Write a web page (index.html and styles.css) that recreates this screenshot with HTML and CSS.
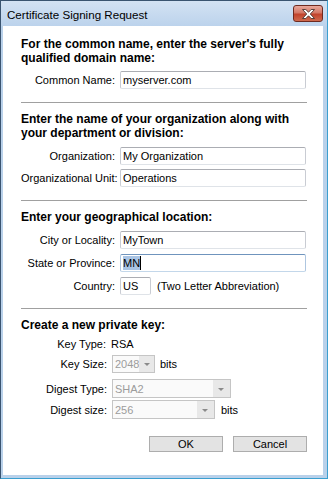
FILE: index.html
```html
<!doctype html>
<html>
<head>
<meta charset="utf-8">
<title>Certificate Signing Request</title>
<link rel="stylesheet" href="styles.css">
</head>
<body>
<div class="window">
	<div class="titlebar">
		<span class="title">Certificate Signing Request</span>
		<div class="close">
			<svg width="13" height="10" viewBox="0 0 13 10"><polygon points="0.5,0.5 3.8,0.5 6.5,3.2 9.2,0.5 12.5,0.5 8.3,5 12.5,9.5 9.2,9.5 6.5,6.8 3.8,9.5 0.5,9.5 4.7,5" fill="#fff" stroke="#4a3430" stroke-width="0.9" stroke-linejoin="round"/></svg>
		</div>
	</div>
	<div class="client">
		<div class="group first">
			<h2>For the common name, enter the server's fully qualified domain name:</h2>
			<div class="row r1"><label>Common Name:</label><div class="edit">myserver.com</div></div>
		</div>
		<hr>
		<div class="group">
			<h2>Enter the name of your organization along with your department or division:</h2>
			<div class="row r1"><label>Organization:</label><div class="edit">My Organization</div></div>
			<div class="row r2"><label>Organizational Unit:</label><div class="edit">Operations</div></div>
		</div>
		<hr>
		<div class="group">
			<h2>Enter your geographical location:</h2>
			<div class="row r1"><label>City or Locality:</label><div class="edit">MyTown</div></div>
			<div class="row"><label>State or Province:</label><div class="edit focus"><span class="sel">MN</span><i class="caret"></i></div></div>
			<div class="row"><label>Country:</label><div class="edit short">US</div><span class="note">(Two Letter Abbreviation)</span></div>
		</div>
		<hr>
		<div class="group">
			<h2>Create a new private key:</h2>
			<div class="krow ktype"><label>Key Type:</label><span>RSA</span></div>
			<div class="krow ksize"><label>Key Size:</label><div class="combo c-size"><span>2048</span><b></b></div><span class="unit">bits</span></div>
			<div class="krow dtype"><label>Digest Type:</label><div class="combo c-type"><span>SHA2</span><b></b></div></div>
			<div class="krow dsize"><label>Digest size:</label><div class="combo c-dsize"><span>256</span><b></b></div><span class="unit">bits</span></div>
		</div>
		<div class="buttons">
			<button class="btn">OK</button>
			<button class="btn">Cancel</button>
		</div>
	</div>
</div>
</body>
</html>
```
FILE: styles.css
```css
*{ margin:0; padding:0; box-sizing:border-box}
body{ width:328px; height:479px; overflow:hidden; font-family:"Liberation Sans", Arial, sans-serif; font-size:11px; color:#000; background:#fff}

.window{ width:328px; height:479px; display:flex; flex-direction:column; padding:0 4px 3px 2px; border:1px solid #3a5470; border-right-color:#3b9fd0; border-bottom-color:#3b9fd0; background:linear-gradient(#d3e2f3 0, #bcd3ec 25px, #b9d1ea 26px)}

.titlebar{ height:25px; display:flex; justify-content:space-between; align-items:flex-start}
.titlebar .title{ font-size:11.6px; line-height:14px; padding:7px 0 0 4px; color:#000}
.close{ width:30px; height:17px; margin-top:4px; display:flex; align-items:center; justify-content:center; border:1px solid #6e2a20; border-radius:3px; background:linear-gradient(#e8a89c 0, #d47866 45%, #c2432c 55%, #cf6a4e 100%)}
.close svg{ display:block}

.client{ flex:1; background:#fff; padding:11px 16px 0 18px}

h2{ font-size:12px; line-height:14px; font-weight:bold}
hr{ border:0; height:1px; background:#a0a0a0; margin-top:13px}
.group{ margin-top:9px}
.group.first{ margin-top:0}

.row{ display:flex; align-items:center; height:18px; margin-top:5px}
.row.r1{ margin-top:6px}
.row.r2{ margin-top:4px}
.group .row.r1{ margin-top:7px}
.group.first .row.r1{ margin-top:6px}
.row label{ width:94px; text-align:right; margin-right:5px; white-space:nowrap}
.edit{ width:186px; height:18px; border:1px solid #abadb3; border-color:#abadb3 #c9ccd3 #dfe3e8 #c9ccd3; border-radius:2px; padding-left:2px; line-height:16px; white-space:nowrap; display:flex; align-items:center}
.edit.focus{ border-color:#6f94bd #aec6e0 #c3d7ea #aec6e0}
.edit.short{ width:31px}
.sel{ background:#a9c4e4; line-height:14px}
.caret{ width:1px; height:14px; background:#000}
.note{ margin-left:6px}

.krow{ display:flex; align-items:center}
.krow label{ width:86px; text-align:right; margin-right:5px; white-space:nowrap}
.ktype{ height:14px; margin-top:5px}
.ktype label{ width:85px; margin-right:5px}
.ksize{ height:18px; margin-top:4px}
.dtype{ height:19px; margin-top:6px}
.dsize{ height:19px; margin-top:2px}
.combo{ height:100%; display:flex; border:1px solid #c5c5c5; background:#fafafa; color:#9c9c9c}
.combo span{ flex:1; padding-left:2px; line-height:16px; display:flex; align-items:center}
.combo b{ width:17px; background:#e8e8e8; position:relative}
.combo b:after{ content:""; position:absolute; left:5px; top:50%; margin-top:-1px; border:3px solid transparent; border-top:3px solid #8a8a8a; border-bottom:0}
.c-size{ width:43px}
.c-type{ width:119px}
.c-dsize{ width:103px}
.unit{ margin-left:5px}
.dsize .unit{ margin-left:6px}

.buttons{ display:flex; justify-content:flex-end; gap:10px; margin-top:17px}
.btn{ width:74px; height:16px; border:1px solid #adadad; background:#e3e3e3; font-family:"Liberation Sans", Arial, sans-serif; font-size:11px; line-height:14px; color:#000}
```
